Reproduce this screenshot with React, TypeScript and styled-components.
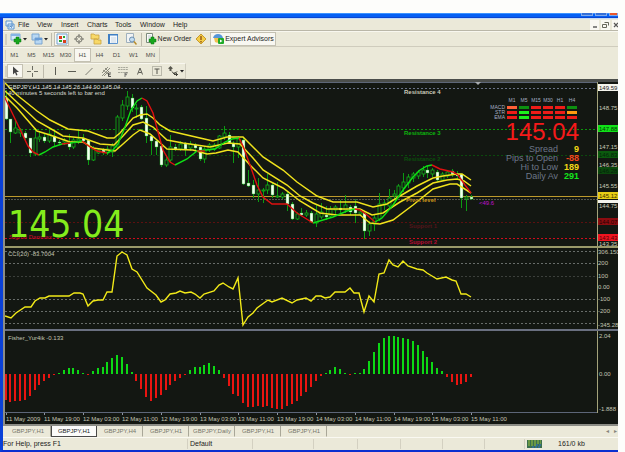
import React from "react";
import styled, { createGlobalStyle } from "styled-components";

const BEIGE = "#ebe9d9";
const CHART = "#131712";
const UI = '"Liberation Sans", Arial, sans-serif';
const CONDENSED = '"DejaVu Sans Condensed", "DejaVu Sans", sans-serif';

const Global = createGlobalStyle`
  * { box-sizing: border-box; }
  body { margin: 0; background: #fdfdfb; font: 7px/10px ${UI}; color: #1c1c1c; overflow: hidden; }
  button, a { font: inherit; color: inherit; text-decoration: none; }
  button { margin: 0; padding: 0; border: 0; background: none; }
`;

const Page = styled.main`
  padding: 13px 7px 0 0;
`;
const Frame = styled.div`
  display: flex;
  flex-direction: column;
  border-left: 3px solid #0a41d8;
  border-bottom: 2px solid #0a2fd0;
  background: ${BEIGE};
`;
const TitleBar = styled.header`
  display: flex;
  justify-content: flex-end;
  gap: 2px;
  height: 5px;
  margin-left: -3px;
  background: linear-gradient(#3b93ff 0 1px, #0560f4 1px 4px, #0a45d0 4px);
`;
const TitleButton = styled.button<{ $close?: boolean }>`
  width: ${(p) => (p.$close ? 9 : 12)}px;
  height: 3px;
  background: ${(p) => (p.$close ? "#e8562c" : "#3470d8")};
  border: 1px solid #7fa8ec;
  border-top: 0;
`;
const MenuBar = styled.nav`
  display: flex;
  align-items: center;
  height: 13px;
  padding-left: 2px;
  border-top: 1px solid #c2dcf8;
  border-bottom: 1px solid #bab7a8;
`;
const MenuItem = styled.button<{ $w: number }>`
  width: ${(p) => p.$w}px;
  text-align: left;
  white-space: nowrap;
`;
const MenuIcon = styled.svg`
  width: 10px;
  height: 10px;
  margin-right: 3px;
`;
const MdiButtons = styled.div`
  display: flex;
  gap: 2px;
  margin-left: auto;
  overflow: hidden;
`;
const MdiButton = styled.button<{ $w: number }>`
  width: ${(p) => p.$w}px;
  height: 10px;
  background: #f9f8f2;
  svg { display: block; width: 9px; height: 10px; }
`;
const Bar = styled.div<{ $w?: number }>`
  display: flex;
  align-items: center;
  height: 16px;
  width: ${(p) => (p.$w ? `${p.$w}px` : "auto")};
  padding-left: 2px;
  border-top: 1px solid #f8f7ef;
  border-bottom: 1px solid #cfccbd;
  border-right: ${(p) => (p.$w ? "1px solid #cfccbd" : "0")};
`;
const Grip = styled.span`
  width: 2px;
  height: 11px;
  background: #d3d0c0;
`;
const ToolButton = styled.button<{ $w: number; $on?: boolean }>`
  display: flex;
  align-items: center;
  justify-content: center;
  gap: 1px;
  flex: none;
  width: ${(p) => p.$w}px;
  height: 14px;
  white-space: nowrap;
  background: ${(p) => (p.$on ? "#f8f7f1" : "transparent")};
  border: 1px solid ${(p) => (p.$on ? "#c4c1b2" : "transparent")};
`;
const Frames = styled(Bar)`
  font-size: 6px;
  color: #4d4d48;
`;
const Glyph = styled.svg`
  flex: none;
  width: 12px;
  height: 12px;
`;
const Drop = styled.svg`
  flex: none;
  width: 4px;
  height: 4px;
`;
const Rule = styled.span`
  width: 1px;
  height: 13px;
  margin: 0 2px;
  background: #bdbaab;
`;
const Charts = styled.section`
  display: flex;
  flex-direction: column;
  border: solid #8c8d86;
  border-width: 3px 0 2px 2px;
  border-top-color: #4b4e4b;
  background: ${CHART};
`;
const PanelRow = styled.div<{ $h: number; $line?: string }>`
  display: grid;
  grid-template-columns: minmax(0, 1fr) 20px;
  height: ${(p) => p.$h}px;
  border-bottom: ${(p) => (p.$line ? `2px solid ${p.$line}` : "0")};
`;
const Plot = styled.div`
  position: relative;
  border-right: 1px solid #a3a37a;
  overflow: hidden;
`;
const Drawing = styled.svg`
  display: block;
  width: 100%;
  height: 100%;
  font-family: ${UI};
  font-size: 6px;
`;
const Signals = styled.div`
  position: absolute;
  top: 16px;
  right: 18px;
  display: flex;
  flex-direction: column;
  align-items: flex-end;
`;
const SignalTable = styled.table`
  border-collapse: separate;
  border-spacing: 2px 0;
  font-size: 5px;
  line-height: 5px;
  color: #a7b0c4;
  th { padding: 0; font-weight: normal; text-align: right; width: 10px; }
  thead th { text-align: center; height: 7px; vertical-align: top; }
  td { padding: 1px 0; height: 5px; }
`;
const Lamp = styled.span<{ $c: string }>`
  display: block;
  width: 10px;
  height: 3px;
  background: ${(p) => p.$c};
`;
const Quote = styled.div`
  font-size: 24px;
  line-height: 24px;
  color: #f51a1a;
`;
const Stats = styled.dl`
  display: grid;
  grid-template-columns: auto 21px;
  margin: 1px 0 0;
  font-size: 9px;
  line-height: 9px;
  text-align: right;
  color: #6d7688;
  dt, dd { margin: 0; }
`;
const StatValue = styled.dd<{ $c: string }>`
  font-weight: bold;
  color: ${(p) => p.$c};
`;
const BigQuote = styled.div`
  position: absolute;
  left: 3px;
  bottom: 0;
  font: 37px/42px ${CONDENSED};
  color: #84ec1c;
`;
const Tabs = styled.nav`
  display: flex;
  height: 11px;
  padding-left: 2px;
  font-size: 6px;
  color: #85847a;
`;
const Tab = styled.a<{ $on?: boolean }>`
  width: 46px;
  text-align: center;
  white-space: nowrap;
  background: ${(p) => (p.$on ? "#fcfcfa" : "transparent")};
  border: solid ${(p) => (p.$on ? "#4a4a48" : "transparent")};
  border-width: 0 1px 1px;
  border-right-color: ${(p) => (p.$on ? "#4a4a48" : "#a9a798")};
  && { color: ${(p) => (p.$on ? "#222" : "#77766a")}; }
`;
const Arrows = styled.span`
  margin-left: auto;
  padding-right: 1px;
`;
const Status = styled.footer`
  display: flex;
  align-items: center;
  height: 13px;
  border-top: 1px solid #faf9f2;
`;
const Cell = styled.span<{ $w?: number }>`
  display: flex;
  align-items: center;
  flex: ${(p) => (p.$w ? `0 0 ${p.$w}px` : "1")};
  height: 10px;
  padding-left: 2px;
  border-left: 1px solid #d3d0c1;
  white-space: nowrap;
  &:first-child { border: 0; padding-left: 0; }
`;
const Meter = styled.svg`
  width: 15px;
  height: 8px;
  margin-right: 16px;
`;

const barX = (i: number) => 5.5 + i * 4.85;

/* high, body top, body bottom, low, falling */
const candles: [number, number, number, number, number][] = [
  [90, 98, 119, 120, 1], [119, 119, 132, 143, 1], [120, 128, 133, 134, 0], [128, 130, 133, 137, 0],
  [131, 133, 138, 140, 1], [138, 138, 153, 157, 1], [128, 138, 154, 156, 0], [132, 137, 139, 142, 0],
  [134, 137, 141, 143, 1], [130, 134, 141, 143, 0], [130, 136, 142, 147, 1], [140, 142, 143, 145, 1],
  [138, 140, 142, 145, 0], [134, 143, 147, 150, 1], [138, 140, 147, 149, 0], [130, 139, 141, 144, 0],
  [134, 138, 141, 143, 1], [140, 140, 160, 165, 1], [146, 149, 160, 161, 0], [148, 150, 153, 154, 0],
  [148, 150, 153, 155, 1], [146, 149, 153, 155, 0], [143, 146, 152, 157, 0], [115, 117, 147, 149, 0],
  [100, 105, 118, 121, 0], [91, 97, 106, 110, 0], [94, 98, 108, 112, 1], [104, 108, 109, 118, 0],
  [105, 107, 119, 120, 1], [106, 118, 136, 143, 1], [134, 136, 141, 155, 1], [139, 141, 147, 155, 1],
  [144, 146, 165, 167, 1], [155, 160, 165, 167, 0], [135, 147, 160, 162, 0], [144, 147, 149, 151, 1],
  [141, 144, 149, 151, 0], [142, 144, 149, 156, 1], [141, 144, 148, 151, 0], [143, 145, 148, 150, 1],
  [145, 147, 159, 161, 1], [147, 149, 159, 163, 0], [143, 145, 150, 152, 0], [143, 145, 149, 151, 0],
  [135, 136, 148, 149, 0], [126, 133, 137, 140, 0], [132, 135, 143, 144, 1], [141, 143, 147, 163, 1],
  [136, 139, 147, 158, 0], [138, 140, 184, 185, 1], [170, 183, 186, 187, 1], [180, 185, 194, 198, 1],
  [178, 190, 194, 202, 0], [188, 190, 191, 203, 0], [174, 185, 190, 194, 0], [183, 185, 195, 198, 1],
  [182, 196, 197, 198, 0], [192, 194, 197, 199, 0], [192, 194, 204, 211, 1], [202, 204, 219, 220, 1],
  [212, 214, 219, 220, 0], [208, 213, 215, 216, 1], [210, 213, 215, 217, 0], [211, 213, 222, 223, 1],
  [205, 214, 223, 227, 0], [203, 212, 217, 219, 0], [206, 215, 217, 220, 1], [206, 209, 216, 218, 0],
  [205, 207, 210, 214, 0], [200, 208, 210, 213, 1], [195, 205, 210, 213, 0], [205, 207, 212, 215, 1],
  [199, 206, 213, 223, 1], [210, 212, 214, 216, 0], [211, 213, 231, 239, 1], [221, 224, 231, 236, 0],
  [215, 218, 224, 231, 0], [193, 204, 219, 221, 0], [200, 203, 205, 210, 0], [189, 198, 206, 208, 0],
  [190, 194, 196, 199, 0], [184, 186, 196, 197, 0], [173, 182, 188, 192, 0], [174, 177, 183, 188, 0],
  [172, 174, 178, 182, 0], [170, 172, 176, 179, 0], [166, 170, 174, 177, 0], [166, 170, 173, 178, 1],
  [168, 170, 174, 177, 0], [170, 172, 180, 182, 1], [172, 174, 180, 181, 0], [170, 172, 176, 178, 0],
  [169, 171, 174, 177, 1], [171, 174, 176, 179, 1], [174, 174, 198, 208, 1], [195, 197, 199, 211, 0],
  [195, 197, 199, 200, 1],
];

const averages = [
  "5,83 17,95 37,111 50,120 68,129 88,131 107,138 114,138 120,133 133,118 140,115 147,114 153,118 160,125 170,131 187,135 200,138 213,141 227,137 243,137 263,157 283,170 297,182 317,196 333,202 357,202 373,207 387,204 400,196 417,186 433,178 443,176 457,174 462,174 471,180",
  "5,91 20,105 37,121 53,130 63,136 83,138 100,144 114,145 123,136 133,125 143,122 153,127 167,140 183,143 210,147 228,143 240,144 253,158 263,170 287,185 300,196 313,203 327,209 353,209 360,209 372,215 383,213 400,202 417,193 433,183 447,180 457,179 464,181 471,186",
  "5,96 17,108 37,131 50,135 70,142 83,142 93,148 115,151 123,144 133,135 140,130 150,134 157,140 167,149 193,150 207,154 216,153 228,150 238,152 250,165 263,178 283,188 300,201 320,213 337,215 360,215 370,223 380,224 393,220 413,205 433,189 450,184 457,184 471,193",
];

const trend: [string, string][] = [
  ["#e01010", "5,98 17,123 28,146 33,152 39,155"],
  ["#0fe016", "39,155 45,152 53,147 62,144 70,143 77,142 82,141"],
  ["#e01010", "62,144 70,143"],
  ["#e01010", "82,141 90,147 97,151 107,153"],
  ["#0fe016", "107,153 113,150 118,144 125,127 131,110 137,101 142,98"],
  ["#e01010", "142,98 147,101 153,113 158,132 163,150 170,162 175,165"],
  ["#0fe016", "175,165 187,159 197,151 215,149 225,142 232,139 239,138"],
  ["#e01010", "197,151 205,151"],
  ["#e01010", "239,138 243,146 250,165 257,185 263,197 272,204 287,204 297,213 313,223"],
  ["#0fe016", "313,223 333,217 347,211 355,209"],
  ["#e01010", "355,209 360,210 367,215 375,222"],
  ["#0fe016", "375,222 382,218 393,205 403,190 413,177 420,170 427,166 432,165"],
  ["#e01010", "432,165 440,169 453,172 458,175 465,185 471,193"],
];

const cci =
  "5,316 11,318 16,313 25,307 31,307 35,301 40,298 45,298 49,296 69,296 74,293 80,293 83,294 88,306 93,301 98,300 103,300 107,292 112,292 117,256 122,252 127,255 132,269 137,272 147,288 156,295 161,302 165,300 170,294 176,293 180,291 185,293 191,292 195,294 200,298 204,294 214,291 219,285 223,283 229,287 233,289 238,278 243,325 248,317 253,313 257,308 268,300 272,302 282,298 292,303 297,300 306,298 311,301 316,296 321,296 325,298 330,297 335,292 345,292 350,288 354,293 359,293 364,312 369,296 374,302 379,274 384,273 389,260 393,265 398,267 403,261 408,266 417,269 423,270 427,273 432,276 437,279 446,277 452,280 456,281 461,294 466,294 471,297";

const fisher = [
  -26, -28, -27, -27, -26, -22, -16, -11, -7, -4, -1, 1, 4, 6, 6, 4, 1, -1, 3, 6, 7, 12, 16, 19, 17, 10, 2, -7,
  -15, -23, -27, -24, -21, -16, -11, -7, -4, -1, 4, 7, 7, 9, 11, 8, 4, -4, -12, -20, -22, -29, -33, -33, -32,
  -33, -32, -34, -35, -35, -32, -30, -27, -22, -18, -13, -7, -2, 1, 4, 7, 5, 1, -1, 1, 1, 5, 13, 22, 31, 36, 38,
  38, 37, 36, 35, 33, 29, 23, 17, 12, 6, 3, -3, -8, -11, -10, -8, -3,
];

const levels: [number, string, string | undefined][] = [
  [88, "#6a7388", "2 2"], [129, "#0c960c", "2 2"], [155, "#0b4a0d", "2 2"], [196, "#bd9a2c", undefined],
  [199, "#56584f", "2 1"], [222, "#5c1010", "2 2"], [238, "#cf0c1c", "2 2"],
];

const levelNames: [string, number, number, string][] = [
  ["Resistance 4", 404, 94, "#c9cab8"], ["Resistance 3", 404, 135, "#0db40d"], ["Resistance 2", 404, 161, "#0b4f0d"],
  ["Pivot level", 406, 202, "#c7931a"], ["Support 1", 409, 228, "#54141a"], ["Support 2", 409, 244, "#b40b33"],
];

const prices: [string, number, string?, string?][] = [
  ["148.75", 108], ["147.15", 147], ["146.35", 165], ["145.55", 186], ["144.75", 206], ["143.35", 244],
  ["149.59", 88, "#f4f4ec", "#222"], ["147.88", 129, "#10e218", "#043804"], ["146.83", 155, "#0b5a0e", "#04240a"],
  ["146.28", 171, "#0a470c", "#04200a"], ["145.12", 196, "#e8cd16", "#3a3000"],
  ["144.07", 222, "#8c0c10", "#240202"], ["143.43", 238, "#f01420", "#500004"],
];

const dates = [
  "11 May 2009", "11 May 19:00", "12 May 03:00", "12 May 11:00", "12 May 19:00", "13 May 03:00", "13 May 11:00",
  "13 May 19:00", "14 May 03:00", "14 May 11:00", "14 May 19:00", "15 May 03:00", "15 May 11:00",
];

const R = "#ee1c18";
const G = "#1cf01c";
const D = "#0c8f10";
const signals: [string, string[]][] = [
  ["MACD", ["#ff6038", D, R, R, R, D]],
  ["STR", [R, G, R, R, R, "#ff9a10"]],
  ["EMA", [R, G, R, R, R, R]],
];

const Arrow = () => (
  <Drop viewBox="0 0 4 4"><path d="M0 1h4L2 3.4z" fill="#222" /></Drop>
);

const Candles = () => (
  <g>
    {candles.map(([h, t, b, l, fall], i) => {
      const x = Math.round(barX(i));
      return (
        <g key={i}>
          <path d={`M${x + 0.5} ${h}V${t}M${x + 0.5} ${b}V${l}`} stroke="#0c9a12" />
          <rect x={x - 1} y={t} width="3" height={Math.max(1, b - t)} fill={fall ? "#f4fff0" : CHART}
            stroke="#12b41a" strokeWidth={fall ? 0.4 : 0.8} />
        </g>
      );
    })}
  </g>
);

const MainPanel = () => (
  <PanelRow $h={166} $line="#99996a">
    <Plot>
      <Drawing>
        <g transform="translate(-5 -82)">
          <rect x="5" y="82" width="100%" height="1" fill="#5d6678" />
          {levels.map(([y, c, dash]) => (
            <line key={y} x1="5" x2="120%" y1={y + 0.5} y2={y + 0.5} stroke={c} strokeDasharray={dash} />
          ))}
          <text x="9" y="239" fontWeight="bold" fill="#a00c22">Signal Danmax</text>
          <Candles />
          {averages.map((p) => (
            <polyline key={p} points={p} fill="none" stroke="#f0e31c" strokeWidth="1.5" />
          ))}
          {trend.map(([c, p]) => (
            <polyline key={p} points={p} fill="none" stroke={c} strokeWidth="1.4" />
          ))}
          {levelNames.map(([n, x, y, c]) => (
            <text key={n} x={x} y={y} fontWeight="bold" fill={c}>{n}</text>
          ))}
          <text x="8" y="89" fill="#d8dad0">GBPJPY,H1  145.14 145.26 144.90 145.04</text>
          <text x="8" y="95" fill="#d8dad0">40 minutes 5 seconds left to bar end</text>
          <text x="479" y="205" fill="#c010d0">&lt;49.6</text>
          <path d="M475 82h6l-3 3z" fill="#a9adb2" />
        </g>
      </Drawing>
      <BigQuote>145.04</BigQuote>
      <Signals>
        <SignalTable>
          <thead>
            <tr><th />{["M1", "M5", "M15", "M30", "H1", "H4"].map((h) => <th key={h} scope="col">{h}</th>)}</tr>
          </thead>
          <tbody>
            {signals.map(([name, cs]) => (
              <tr key={name}>
                <th scope="row">{name}</th>
                {cs.map((c, i) => <td key={i}><Lamp $c={c} /></td>)}
              </tr>
            ))}
          </tbody>
        </SignalTable>
        <Quote>145.04</Quote>
        <Stats>
          <dt>Spread</dt><StatValue $c="#f2d716">9</StatValue>
          <dt>Pips to Open</dt><StatValue $c="#f4451c">-88</StatValue>
          <dt>Hi to Low</dt><StatValue $c="#f2d716">189</StatValue>
          <dt>Daily Av</dt><StatValue $c="#14e61c">291</StatValue>
        </Stats>
      </Signals>
    </Plot>
    <Drawing>
      <g transform="translate(-598 -82)">
        <rect x="598" y="200" width="20" height="3" fill="#f4f4ec" />
        {prices.map(([p, y, bg, c]) => (
          <g key={p}>
            {bg && <rect x="598" y={y - 4} width="20" height="7" fill={bg} />}
            <text x="599" y={y + 2} fill={c ?? "#c9cbb8"}>{p}</text>
          </g>
        ))}
      </g>
    </Drawing>
  </PanelRow>
);

const CciPanel = () => (
  <PanelRow $h={83} $line="#6a7080">
    <Plot>
      <Drawing>
        <g transform="translate(-5 -248)">
          {[251, 263, 276, 299, 311, 323].map((y) => (
            <line key={y} x1="5" x2="120%" y1={y + 0.5} y2={y + 0.5} stroke={y === 276 ? "#3c403c" : "#686d6a"} strokeDasharray="2 2" />
          ))}
          <polyline points={cci} fill="none" stroke="#f2ea18" strokeWidth="1.4" />
          <text x="8" y="256" fill="#c3c5b2">CCI(20) -83.7004</text>
        </g>
      </Drawing>
    </Plot>
    <Drawing fill="#c3c5b2">
      <g transform="translate(-598 -248)">
        <text x="598" y="254">306.150</text>
        <text x="598" y="265">200</text>
        <text x="598" y="278">100</text>
        <text x="598" y="289">0.00</text>
        <text x="598" y="301">-100</text>
        <text x="598" y="313">-200</text>
        <text x="598" y="327">-345.28</text>
      </g>
    </Drawing>
  </PanelRow>
);

const FisherPanel = () => (
  <PanelRow $h={82}>
    <Plot>
      <Drawing>
        <g transform="translate(-5 -331)">
          {fisher.map((v, i) => (
            <rect key={i} x={Math.round(barX(i)) - 1} y={v > 0 ? 374 - v : 374} width="2" height={Math.abs(v)}
              fill={v > 0 ? "#0cd814" : "#ea1410"} />
          ))}
          <text x="8" y="340" fill="#c3c5b2">Fisher_Yur4ik -0.133</text>
          <rect x="5" y="412" width="100%" height="1" fill="#5d6678" />
        </g>
      </Drawing>
    </Plot>
    <Drawing fill="#c3c5b2">
      <g transform="translate(-598 -331)">
        <text x="599" y="338">2.04</text>
        <text x="599" y="376">0.00</text>
        <text x="599" y="411">-1.888</text>
      </g>
    </Drawing>
  </PanelRow>
);

const TimeAxis = () => (
  <PanelRow $h={11}>
    <Drawing fill="#c3c5b2">
      {dates.map((d, i) => {
        const x = Math.round(barX(i * 8)) - 5;
        return (
          <g key={d}>
            <path d={`M${x + 0.5} 0v2`} stroke="#8d93a0" />
            <text x={x} y="8">{d}</text>
          </g>
        );
      })}
    </Drawing>
  </PanelRow>
);

const Plus = () => (
  <path d="M6 4h3v2h2v3H9v2H6V9H4V6h2z" fill="#17a51c" stroke="#0b7a12" strokeWidth=".5" />
);

export default function App() {
  return (
    <>
      <Global />
      <Page>
        <Frame>
          <TitleBar>
            <TitleButton aria-label="Minimize" />
            <TitleButton aria-label="Maximize" />
            <TitleButton $close aria-label="Close" />
          </TitleBar>
          <MenuBar>
            <MenuIcon viewBox="0 0 10 10">
              <path d="M1 1h6v5H1zM3 4h6v5H3z" fill="#e4f0fb" stroke="#5b94cf" />
              <path d="M4.500 7.500l1-1 1 1 1-2" stroke="#2a68b0" strokeWidth=".7" fill="none" />
            </MenuIcon>
            <MenuItem $w={19}>File</MenuItem>
            <MenuItem $w={24}>View</MenuItem>
            <MenuItem $w={26}>Insert</MenuItem>
            <MenuItem $w={28}>Charts</MenuItem>
            <MenuItem $w={25}>Tools</MenuItem>
            <MenuItem $w={33}>Window</MenuItem>
            <MenuItem $w={20}>Help</MenuItem>
            <MdiButtons>
              <MdiButton $w={9} aria-label="Minimize chart"><svg viewBox="0 0 9 10"><path d="M3 7h4" stroke="#555" strokeWidth="1.400" /></svg></MdiButton>
              <MdiButton $w={9} aria-label="Restore chart"><svg viewBox="0 0 9 10"><path d="M3.500 2.500h4v3M1.500 4.500h4v3h-4z" stroke="#66665a" fill="none" /></svg></MdiButton>
              <MdiButton $w={6} aria-label="Close chart"><svg viewBox="0 0 9 10"><path d="M2 3l4 4M6 3L2 7" stroke="#555" strokeWidth="1.200" /></svg></MdiButton>
            </MdiButtons>
          </MenuBar>
          <Bar>
            <Grip />
            <ToolButton $w={22} aria-label="New chart">
              <Glyph viewBox="0 0 12 12"><path d="M1 1h9v6H1z" fill="#d5e9fb" stroke="#7dabd8" /><path d="M1 1h9v2H1z" fill="#86b5e5" /><Plus /></Glyph>
              <Arrow />
            </ToolButton>
            <ToolButton $w={20} aria-label="Profiles">
              <Glyph viewBox="0 0 12 12"><path d="M1 1h7v6H1zM4 5h7v6H4z" fill="#b9d8f3" stroke="#7ba6d2" /><path d="M4 5h7v2H4z" fill="#6a9dd6" /></Glyph>
              <Arrow />
            </ToolButton>
            <Rule />
            <ToolButton $w={15} $on aria-label="Market watch">
              <Glyph viewBox="0 0 12 12"><path d="M1 1h10v10H1z" fill="#f3f8fd" stroke="#74a3d0" /><path d="M3 3h3v3H3z" fill="#e23a1c" /><path d="M7 7h3v3H7z" fill="#d8401c" /><path d="M7 3h2v2H7zM3 7h3v2H3z" fill="#27a52b" /></Glyph>
            </ToolButton>
            <ToolButton $w={19} aria-label="Data window">
              <Glyph viewBox="0 0 12 12"><circle cx="6" cy="6" r="3.200" fill="none" stroke="#77776e" /><path d="M6 1V5M6 7v4M1 6H5M7 6h4" stroke="#77776e" /></Glyph>
            </ToolButton>
            <ToolButton $w={15} aria-label="Navigator">
              <Glyph viewBox="0 0 12 12"><path d="M1 1h3l1 1h4v4H1zM4 6h3l1 1h3v4H4z" fill="#f8d968" stroke="#c9a240" strokeWidth=".8" /></Glyph>
            </ToolButton>
            <ToolButton $w={19} aria-label="Terminal">
              <Glyph viewBox="0 0 12 12"><path d="M1.500 1.500h9v9h-9z" fill="#f4f8fc" stroke="#5f95cf" /><path d="M1 1h2v10H1zM1 1h10v1.500H1z" fill="#3f7fc4" /><path d="M4 5h5M4 7h5M4 9h5" stroke="#b4c4d4" strokeWidth=".6" /></Glyph>
            </ToolButton>
            <ToolButton $w={17} aria-label="Strategy tester">
              <Glyph viewBox="0 0 12 12"><path d="M1.500 .500h7v9h-7z" fill="#f1f3f4" stroke="#9fb0bd" /><circle cx="7" cy="6.500" r="2.500" fill="#c2dcf0" stroke="#6d8fb0" /><path d="M9 8.500l2.500 3" stroke="#b88b2a" strokeWidth="1.500" /></Glyph>
            </ToolButton>
            <Rule />
            <ToolButton $w={48}>
              <Glyph viewBox="0 0 12 12"><path d="M1.500 .500h6v9h-6z" fill="#fafafa" stroke="#7c8a7c" /><path d="M3 3h3M3 5h3" stroke="#9aa" strokeWidth=".6" /><Plus /></Glyph>
              New Order
            </ToolButton>
            <ToolButton $w={18} aria-label="MetaEditor">
              <Glyph viewBox="0 0 12 12"><path d="M6 1L11 6 6 11 1 6z" fill="#f4cd48" stroke="#c79a2c" /><path d="M6 3v4M6 8v1.500" stroke="#8a4a12" strokeWidth="1.300" /></Glyph>
            </ToolButton>
            <ToolButton $w={66} $on>
              <Glyph viewBox="0 0 12 12"><path d="M1 5q1-4 5-4t5 4z" fill="#5596d8" /><path d="M2 5h6v3q-2 3-5 1z" fill="#f0c050" /><rect x="6" y="5" width="6" height="6" rx="1" fill="#1eaa28" /><path d="M8 6.500v3l2.500-1.500z" fill="#fff" /></Glyph>
              Expert Advisors
            </ToolButton>
          </Bar>
          <Frames $w={157}>
            <Grip />
            {["M1", "M5", "M15", "M30", "H1", "H4", "D1", "W1", "MN"].map((t) => (
              <ToolButton key={t} $w={17} $on={t === "H1"}>{t}</ToolButton>
            ))}
          </Frames>
          <Bar $w={183}>
            <Grip />
            <ToolButton $w={16} $on aria-label="Cursor">
              <Glyph viewBox="0 0 12 12"><path d="M4 1.500v8l2-2 1.200 3 1.300-.6L7.300 7H10z" fill="#444" /></Glyph>
            </ToolButton>
            <ToolButton $w={18} aria-label="Crosshair">
              <Glyph viewBox="0 0 12 12"><path d="M6.500 1v4M6.500 8v4M1 6.500h4M8 6.500h4" stroke="#6c6c62" /></Glyph>
            </ToolButton>
            <Rule />
            <ToolButton $w={17} aria-label="Vertical line"><Glyph viewBox="0 0 12 12"><path d="M6.500 2v8" stroke="#5c5c54" /></Glyph></ToolButton>
            <ToolButton $w={17} aria-label="Horizontal line"><Glyph viewBox="0 0 12 12"><path d="M2 6.500h8" stroke="#5c5c54" /></Glyph></ToolButton>
            <ToolButton $w={17} aria-label="Trendline"><Glyph viewBox="0 0 12 12"><path d="M2.500 10l7-7" stroke="#7c7c72" /></Glyph></ToolButton>
            <ToolButton $w={17} aria-label="Channel"><Glyph viewBox="0 0 12 12"><path d="M2 8l6-6M2 11l8-8M4 11l5-5M3 5l5 4M5 3l4 4" stroke="#77776c" strokeWidth=".8" /><path d="M11 8H8.500v3.500H11M8.500 9.700H10.500" stroke="#333" fill="none" strokeWidth=".8" /></Glyph></ToolButton>
            <ToolButton $w={17} aria-label="Fibonacci"><Glyph viewBox="0 0 12 12"><path d="M1 2.500h10M1 4.500h10M1 7.500h10" stroke="#a8a89b" strokeDasharray="2 .6" /><path d="M10.500 8H8v4M8 9.700h2" stroke="#555" fill="none" strokeWidth=".8" /></Glyph></ToolButton>
            <ToolButton $w={17} aria-label="Text"><Glyph viewBox="0 0 12 12"><path d="M3.500 9.500L6 3l2.500 6.500M4.500 7.500h3" stroke="#5c5c54" fill="none" /></Glyph></ToolButton>
            <ToolButton $w={17} aria-label="Text label"><Glyph viewBox="0 0 12 12"><path d="M1.500 1.500h9v9h-9z" stroke="#88887c" fill="none" strokeDasharray="1 1" /><path d="M3.500 4h5M6 4v5" stroke="#55554c" /></Glyph></ToolButton>
            <ToolButton $w={20} aria-label="Arrows">
              <Glyph viewBox="0 0 12 12"><path d="M1 3.500L3.500 1 6 3.500 4.500 4v2h-2V4zM6 8l1.500 1.500L11 6" fill="#55554c" /><path d="M5 6.500l2 2.500M7 9.500h4M9.500 8v3" stroke="#44443c" fill="none" /></Glyph>
              <Arrow />
            </ToolButton>
          </Bar>
          <Charts>
            <MainPanel />
            <CciPanel />
            <FisherPanel />
            <TimeAxis />
          </Charts>
          <Tabs>
            {["GBPJPY,H1", "GBPJPY,H1", "GBPJPY,H4", "GBPJPY,H1", "GBPJPY,Daily", "GBPJPY,H1", "GBPJPY,H1"].map((t, i) => (
              <Tab key={i} href="#" $on={i === 1}>{t}</Tab>
            ))}
            <Arrows>◂ &nbsp; ▸</Arrows>
          </Tabs>
          <Status>
            <Cell>For Help, press F1</Cell>
            <Cell $w={65}>Default</Cell>
            <Cell $w={61} />
            <Cell $w={44} />
            <Cell $w={43} />
            <Cell $w={42} />
            <Cell $w={42} />
            <Cell $w={40} />
            <Cell $w={94}>
              <Meter viewBox="0 0 15 8"><path d="M0 0h15v8H0z" fill="#3b6f4e" /><path d="M1 1h13M1 3h13M1 5h9" stroke="#9ac23c" strokeDasharray="2 1" /><path d="M9 5h5M5 7h9" stroke="#2c6fd0" strokeDasharray="2 1" /></Meter>
              161/0 kb
            </Cell>
          </Status>
        </Frame>
      </Page>
    </>
  );
}
